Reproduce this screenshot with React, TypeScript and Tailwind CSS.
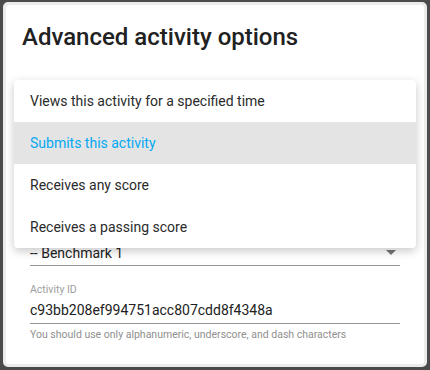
import React from "react";

export default function App() {
  const options = [
    "Views this activity for a specified time",
    "Submits this activity",
    "Receives any score",
    "Receives a passing score",
  ];
  const selected = 1;

  return (
    <div
      className="w-[430px] h-[370px] bg-[#4b4b4b] px-[3px] pt-[2px] pb-[3px]"
      style={{ fontFamily: "Roboto, 'Liberation Sans', sans-serif" }}
    >
      {/* Dialog */}
      <div className="relative h-full bg-white border-[3px] border-[#ececec] rounded-[5px]">
        <h2 className="pl-4 pt-[16px] text-[24px] leading-[32px] font-medium text-[#212121]">
          Advanced activity options
        </h2>

        <div className="px-6">
          {/* space under the open menu */}
          <div className="h-[181px]"></div>

          {/* Benchmark select */}
          <div className="relative pt-[9px] pb-[1px] border-b border-[#949494]">
            <div className="text-[14px] leading-[21px] text-[#212121]">-- Benchmark 1</div>
            <svg
              className="absolute right-[-3px] top-[6px] w-6 h-6 text-[#757575]"
              viewBox="0 0 24 24"
              fill="currentColor"
            >
              <path d="M7 10l5 5 5-5z" />
            </svg>
          </div>

          {/* Activity ID */}
          <div className="mt-[17px]">
            <div className="text-[10.5px] leading-[14px] text-[#9e9e9e]">Activity ID</div>
            <div className="text-[14px] leading-[21px] text-[#212121] pt-[3px] pb-[2px] border-b border-[#949494]">
              c93bb208ef994751acc807cdd8f4348a
            </div>
            <div className="mt-[4px] text-[10.5px] leading-[14px] text-[#8f8f8f]">
              You should use only alphanumeric, underscore, and dash characters
            </div>
          </div>
        </div>

        {/* Open select menu */}
        <div className="absolute left-[8px] top-[75px] w-[402px] bg-white rounded-[4px] shadow-[0_3px_10px_rgba(0,0,0,0.22)]">
          {options.map((opt, i) => (
            <div
              key={i}
              className={`h-[42px] flex items-center pl-4 text-[14px] ${
                i === selected ? "bg-[#e4e4e4] text-[#03a9f4]" : "text-[#2b2b2b]"
              }`}
            >
              {opt}
            </div>
          ))}
        </div>
      </div>
    </div>
  );
}
